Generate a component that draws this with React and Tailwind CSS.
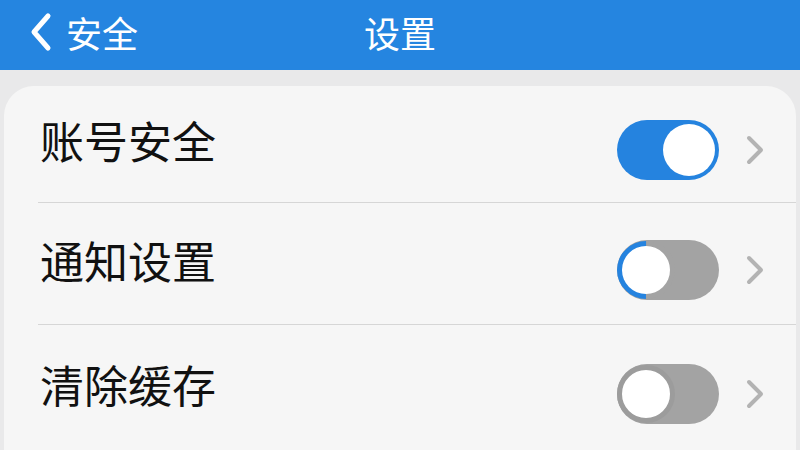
const rows = [
  { label: "账号安全", state: "on", h: "h-[117px]" },
  { label: "通知设置", state: "half", h: "h-[122px]" },
  { label: "清除缓存", state: "off", h: "h-[126px]" },
];

function Toggle({ state }) {
  if (state === "on") {
    return (
      <div className="w-[102px] h-[60px] rounded-full bg-[#2583df] flex items-center justify-end pr-[4px] shrink-0">
        <div className="w-[52px] h-[52px] rounded-full bg-white" />
      </div>
    );
  }
  if (state === "half") {
    return (
      <div className="w-[102px] h-[60px] rounded-full bg-[#a3a3a3] flex items-center shrink-0">
        <div className="w-[58px] h-[58px] rounded-full bg-white border-[5px] border-[#a3a3a3] border-l-[#2583df] border-b-[#2583df] rotate-45" />
      </div>
    );
  }
  return (
    <div className="w-[102px] h-[60px] rounded-full bg-[#a3a3a3] flex items-center shrink-0">
      <div className="w-[58px] h-[58px] rounded-full bg-white border-[5px] border-[#9c9c9c]" />
    </div>
  );
}

function Chevron() {
  return (
    <svg width="20" height="30" viewBox="0 0 20 30" className="shrink-0">
      <polyline points="4,3 16,15 4,27" fill="none" stroke="#b3b3b3" strokeWidth="4" strokeLinecap="round" strokeLinejoin="round" />
    </svg>
  );
}

export default function App() {
  return (
    <div className="w-[800px] h-[450px] overflow-hidden bg-[#e9e9ea] flex flex-col" style={{ fontFamily: '"Noto Sans CJK SC", "Noto Sans", sans-serif' }}>
      {/* Header */}
      <div className="h-[70px] bg-[#2585e0] grid grid-cols-3 items-center pb-[6px] shrink-0">
        <div className="flex items-center pl-[28px] gap-[12px] text-white">
          <svg width="26" height="40" viewBox="0 0 26 40">
            <polyline points="20,4 6,20 20,36" fill="none" stroke="white" strokeWidth="5" strokeLinecap="round" strokeLinejoin="round" />
          </svg>
          <span className="text-[36px] leading-none">安全</span>
        </div>
        <div className="text-center text-white text-[36px] leading-none">设置</div>
        <div />
      </div>

      {/* Card */}
      <div className="flex-1 mt-[16px] mx-[4px] bg-[#f6f6f6] rounded-t-[30px] flex flex-col">
        {rows.map((r, i) => (
          <div key={r.label} className={`${r.h} flex flex-col shrink-0`}>
            <div className="flex-1 flex items-center pl-[36px] pr-[31px]">
              <span className="text-[44px] leading-none text-[#111111] -mt-[8px]">{r.label}</span>
              <div className="ml-auto flex items-center gap-[26px] mt-[12px]">
                <Toggle state={r.state} />
                <Chevron />
              </div>
            </div>
            {i < rows.length - 1 && <div className="ml-[34px] h-[1px] bg-[#d6d6d6]" />}
          </div>
        ))}
      </div>
    </div>
  );
}
